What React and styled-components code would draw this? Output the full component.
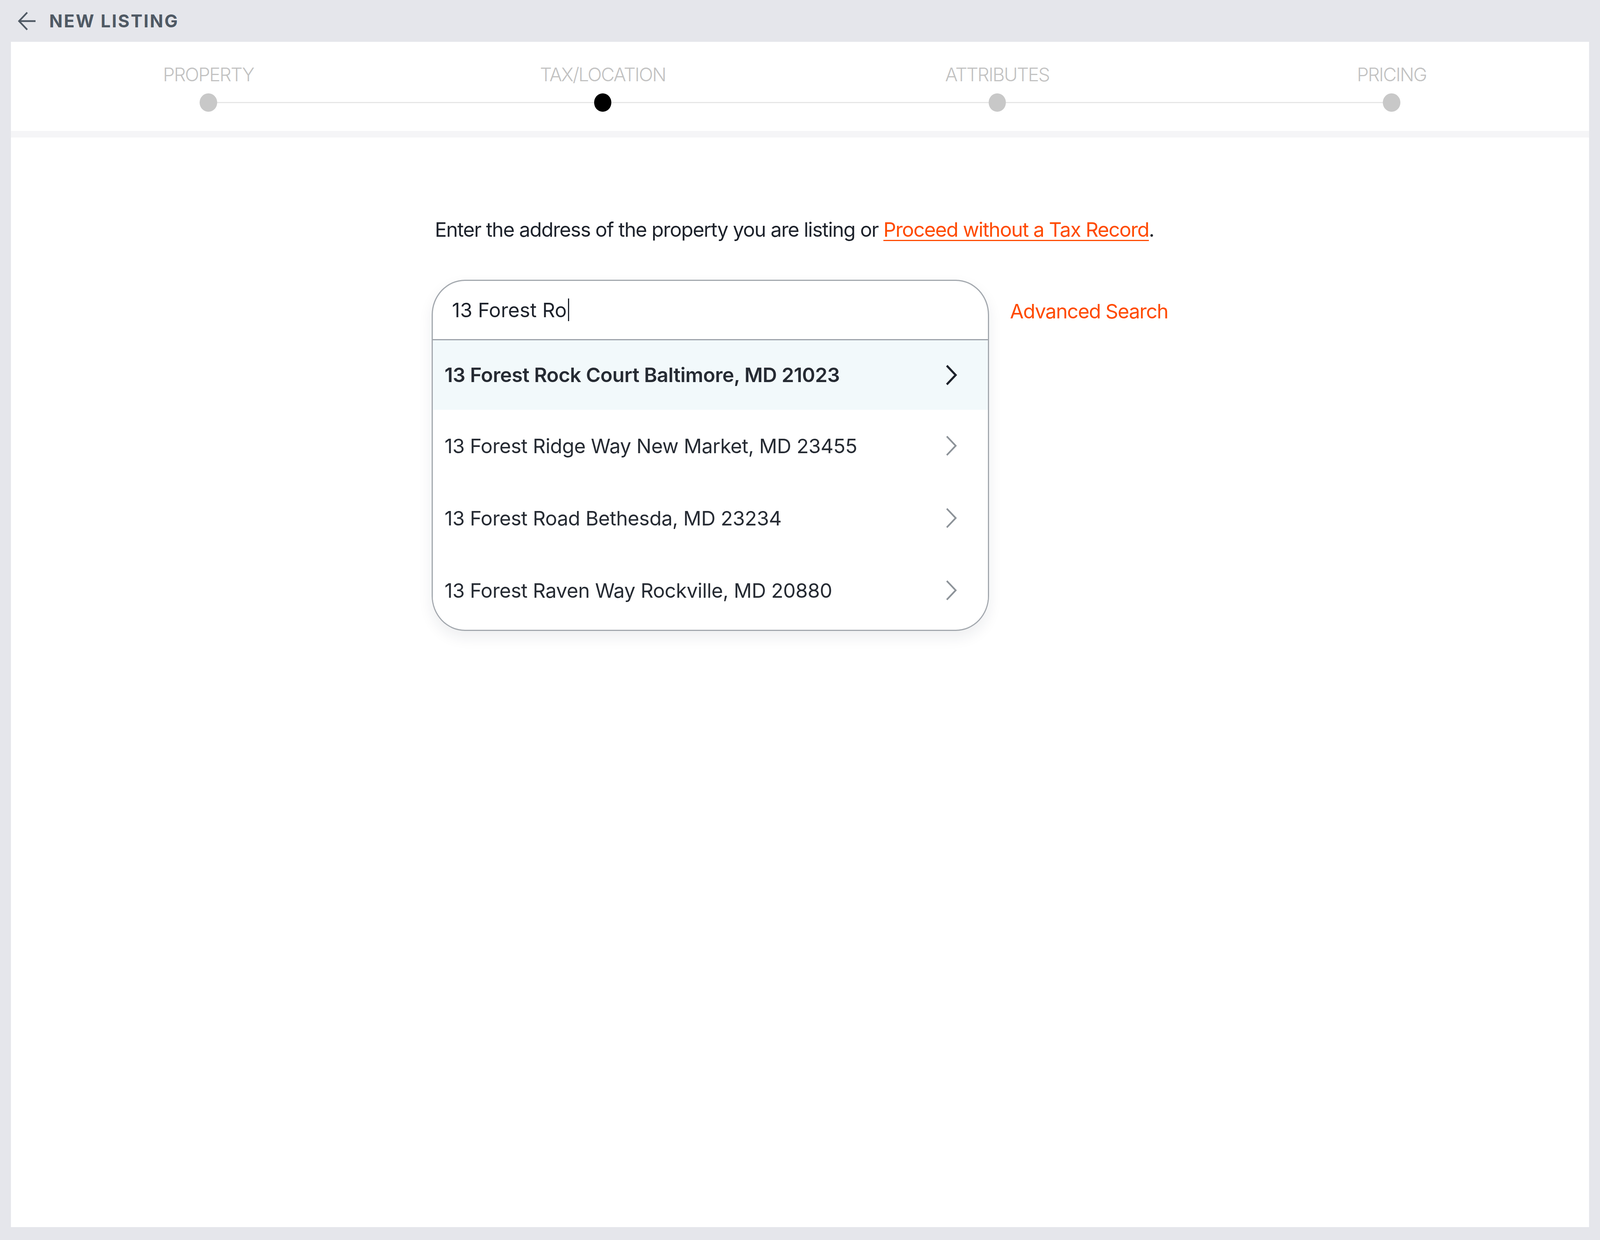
import React from 'react';
import styled, { createGlobalStyle } from 'styled-components';

// horizontal sizes follow the window width (design drawn at 4320 wide)
const h = n => `calc(${n} * 100vw / 4320)`;

const GlobalStyle = createGlobalStyle`
  html, body {
    margin: 0;
    padding: 0;
    background: #e5e6eb;
    font-family: Inter, "Liberation Sans", sans-serif;
    overflow: hidden;
  }
  * { box-sizing: border-box; }
`;

const Page = styled.div`
  width: 100%;
  height: 100vh;
  display: flex;
  flex-direction: column;
  padding: 0 ${h(30)} 33px;
`;

const Header = styled.header`
  height: 107px;
  flex: none;
  display: flex;
  align-items: center;
  gap: ${h(37)};
  padding-left: ${h(18)};
  color: #4f5964;
`;

const BackIcon = styled.svg`
  width: ${h(48)};
  height: 48px;
  flex: none;
`;

const HeaderTitle = styled.h1`
  margin: 0;
  font-size: 45px;
  font-weight: 700;
  letter-spacing: 0.07em;
  line-height: 1;
`;

const Panel = styled.main`
  flex: 1;
  min-height: 0;
  background: #fff;
  display: flex;
  flex-direction: column;
`;

const Stepper = styled.nav`
  display: grid;
  grid-template-columns: repeat(4, 1fr);
  padding: 59px 0 49px;
  border-bottom: 17px solid #f5f5f7;
`;

const Step = styled.div`
  display: flex;
  flex-direction: column;
  align-items: center;
  gap: 23px;
`;

const StepLabel = styled.span`
  font-size: 48px;
  line-height: 1.05;
  font-weight: 300;
  letter-spacing: -0.045em;
  color: #c2c2c2;
`;

const DotRow = styled.div`
  width: 100%;
  display: flex;
  align-items: center;
`;

const Rail = styled.div`
  flex: 1;
  height: 3px;
  background: ${p => (p.$hidden ? 'transparent' : '#e6e6e6')};
`;

const Dot = styled.div`
  width: ${h(47)};
  height: 47px;
  border-radius: 50%;
  background: ${p => (p.$active ? '#000' : '#c8c8c8')};
  flex: none;
`;

const Content = styled.section`
  width: ${h(1990)};
  margin: 0 auto;
  padding-top: 205px;
  display: flex;
  flex-direction: column;
  gap: 96px;
`;

const Intro = styled.p`
  margin: 0 0 0 ${h(9)};
  font-size: 51px;
  line-height: 1.22;
  letter-spacing: -0.03em;
  color: #1d222b;
`;

const Link = styled.a`
  color: #ff4a00;
  text-decoration: underline;
  text-decoration-thickness: 3px;
  text-underline-offset: 8px;
  cursor: pointer;
`;

const SearchRow = styled.div`
  display: flex;
  align-items: flex-start;
  gap: ${h(57)};
`;

const SearchBox = styled.div`
  width: ${h(1505)};
  flex: none;
  border: 3px solid #a3a8ae;
  border-radius: ${h(90)} / 90px;
  overflow: hidden;
  background: #fff;
  box-shadow: 0 16px 36px rgba(30, 40, 60, 0.08);
  padding-bottom: 8px;
`;

const InputArea = styled.div`
  height: 152px;
  display: flex;
  align-items: center;
  padding-left: ${h(52)};
  border-bottom: 3px solid #9da3aa;
  font-size: 51px;
  letter-spacing: 0;
  color: #1d222b;
`;

const Caret = styled.span`
  display: inline-block;
  width: 3px;
  height: 58px;
  margin-left: 3px;
  background: #1d222b;
`;

const Option = styled.div`
  height: ${p => (p.$first ? '178px' : '185px')};
  display: flex;
  align-items: center;
  justify-content: space-between;
  padding: 0 ${h(83)} 0 ${h(32)};
  background: ${p => (p.$active ? '#f2f9fb' : '#fff')};
  font-size: 51px;
  font-weight: ${p => (p.$active ? 600 : 400)};
  letter-spacing: -0.01em;
  color: #262b33;
`;

const Chevron = styled.svg`
  width: ${h(32)};
  height: 52px;
  flex: none;
  color: ${p => (p.$active ? '#1d222b' : '#8d9399')};
`;

const Advanced = styled.a`
  margin-top: 50px;
  font-size: 51px;
  line-height: 1.2;
  letter-spacing: -0.03em;
  color: #ff4a00;
  cursor: pointer;
  white-space: nowrap;
`;

const steps = ['PROPERTY', 'TAX/LOCATION', 'ATTRIBUTES', 'PRICING'];

const results = [
  '13 Forest Rock Court Baltimore, MD 21023',
  '13 Forest Ridge Way New Market, MD 23455',
  '13 Forest Road Bethesda, MD 23234',
  '13 Forest Raven Way Rockville, MD 20880',
];

const App = () => {
  const current = 1;

  return (
    <>
      <GlobalStyle />
      <Page>
        <Header>
          <BackIcon
            viewBox="0 0 48 48"
            preserveAspectRatio="none"
            fill="none"
            stroke="currentColor"
            strokeWidth="4.5"
          >
            <polyline points="25,2 3,24 25,46" />
            <line x1="3" y1="24" x2="48" y2="24" />
          </BackIcon>
          <HeaderTitle>NEW LISTING</HeaderTitle>
        </Header>
        <Panel>
          <Stepper>
            {steps.map((label, i) => (
              <Step key={label}>
                <StepLabel>{label}</StepLabel>
                <DotRow>
                  <Rail $hidden={i === 0} />
                  <Dot $active={i === current} />
                  <Rail $hidden={i === steps.length - 1} />
                </DotRow>
              </Step>
            ))}
          </Stepper>
          <Content>
            <Intro>
              Enter the address of the property you are listing or{' '}
              <Link>Proceed without a Tax Record</Link>.
            </Intro>
            <SearchRow>
              <SearchBox>
                <InputArea>
                  13 Forest Ro<Caret />
                </InputArea>
                {results.map((r, i) => (
                  <Option key={r} $active={i === 0} $first={i === 0}>
                    <span>{r}</span>
                    <Chevron
                      $active={i === 0}
                      viewBox="0 0 32 52"
                      preserveAspectRatio="none"
                      fill="none"
                      stroke="currentColor"
                      strokeWidth={i === 0 ? 5.5 : 4.5}
                    >
                      <polyline points="4,2 28,26 4,50" />
                    </Chevron>
                  </Option>
                ))}
              </SearchBox>
              <Advanced>Advanced Search</Advanced>
            </SearchRow>
          </Content>
        </Panel>
      </Page>
    </>
  );
};

export default App;
